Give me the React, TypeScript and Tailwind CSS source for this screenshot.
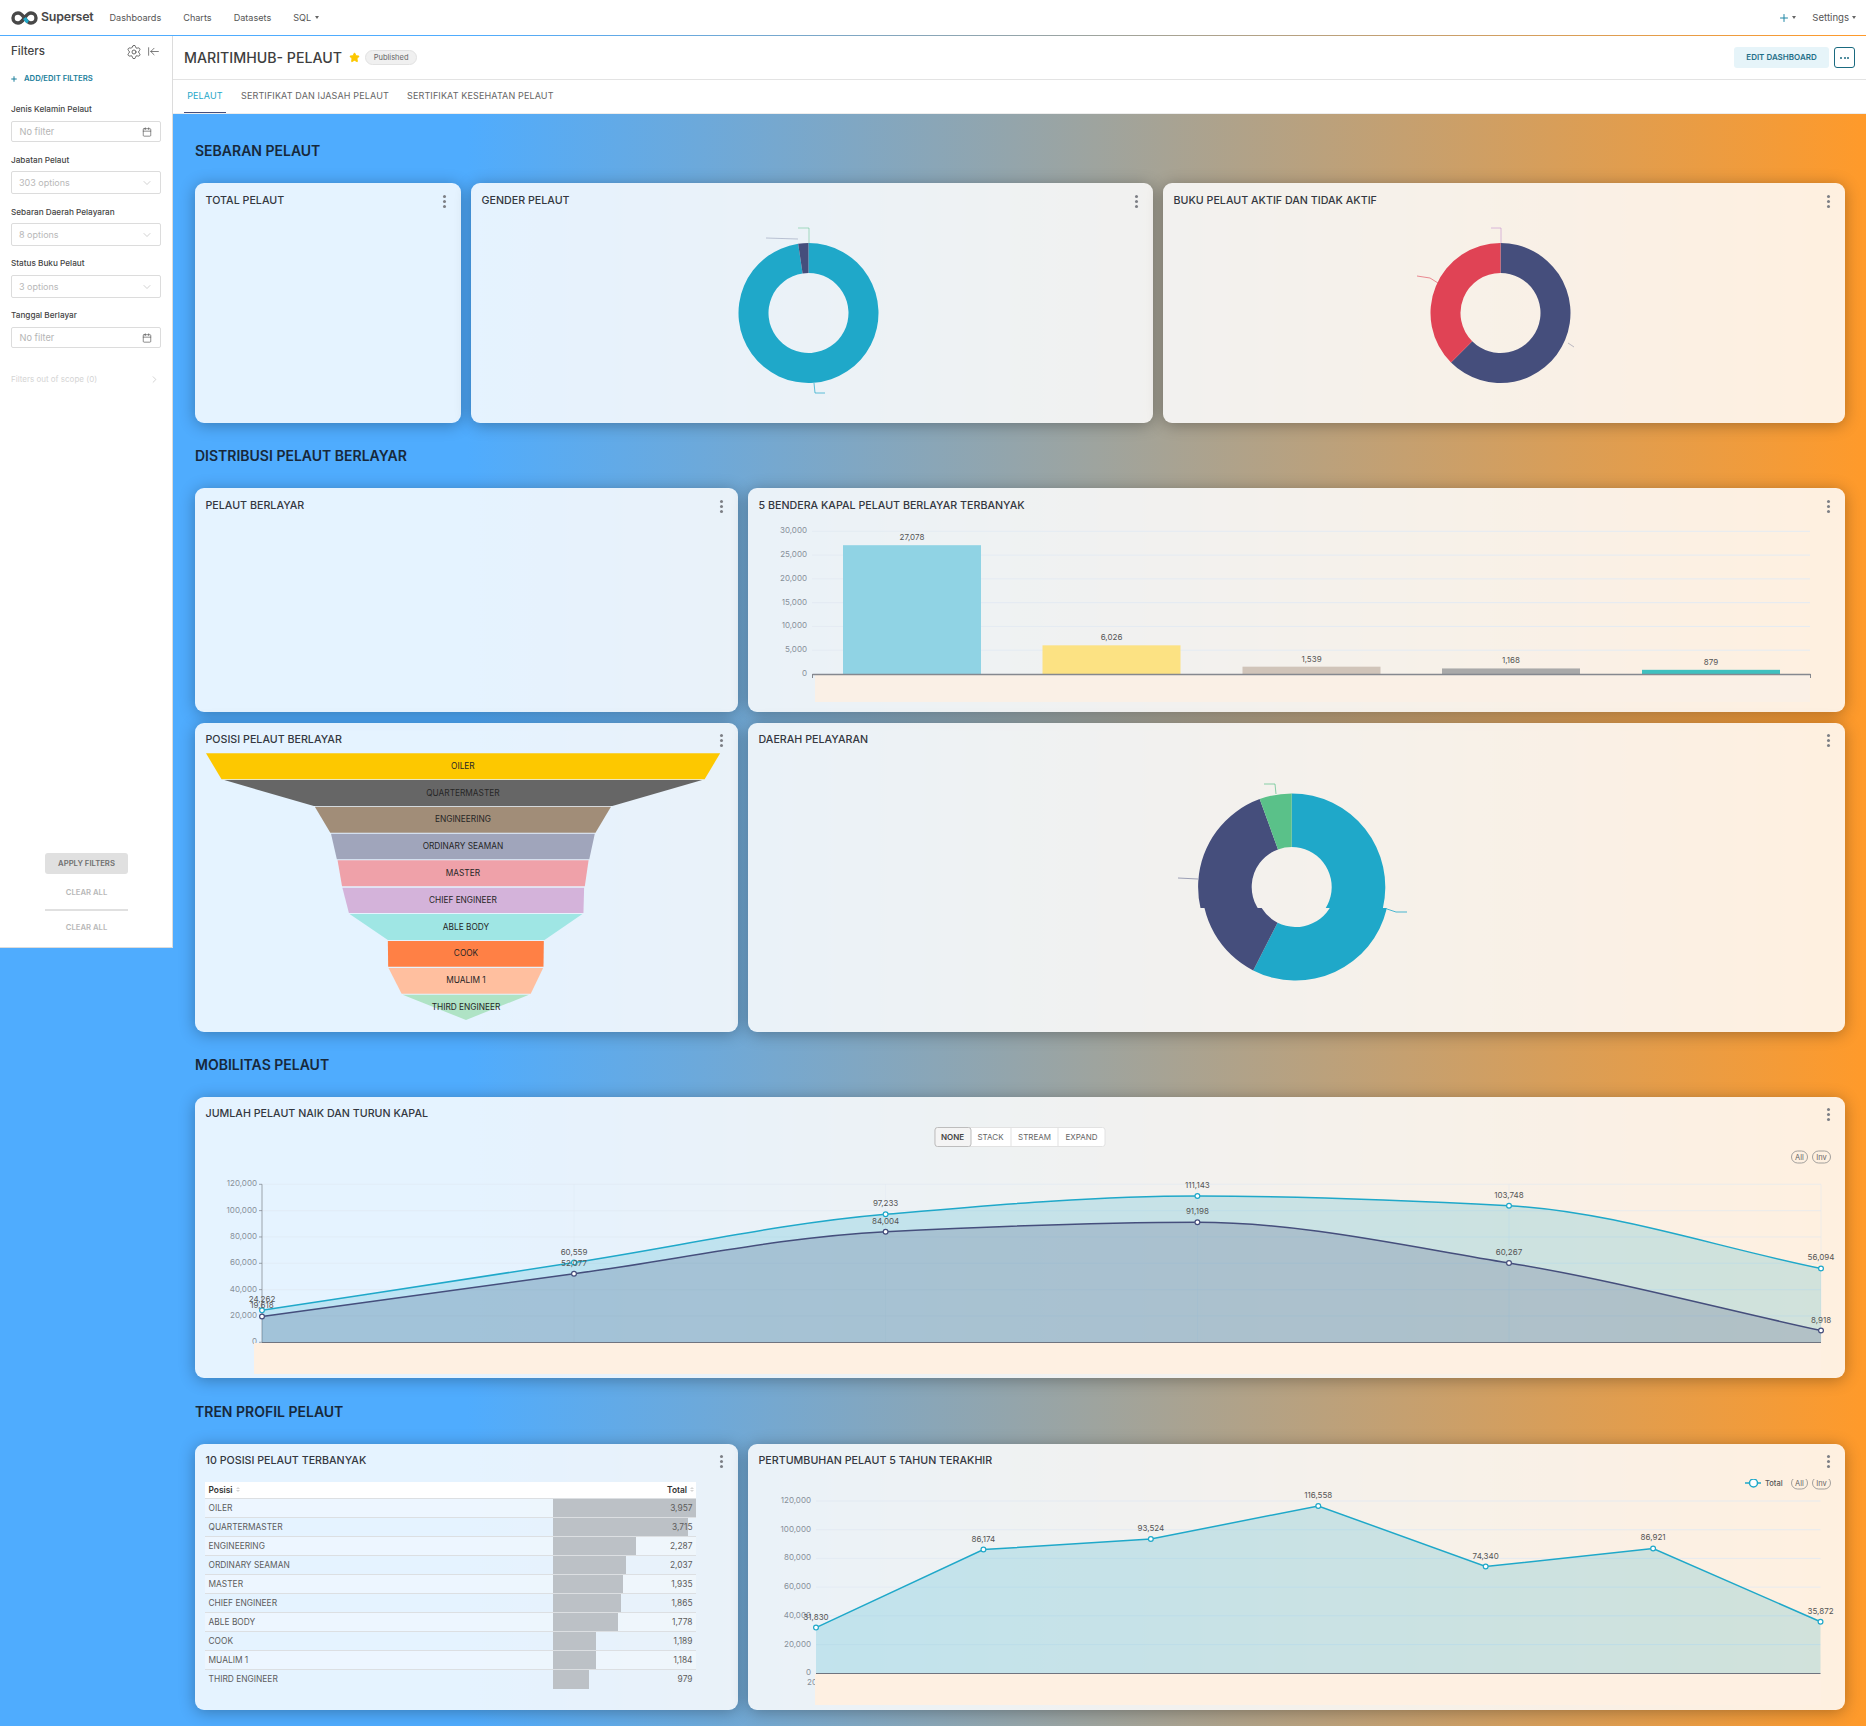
import React from "react";
import { ArrowLeftToLine, Calendar, ChevronDown, ChevronRight, Plus, Settings, Star } from "lucide-react";

const CYAN = "#1fa8c9";
const NAVY = "#454e7c";

type Pt = [number, number];

// d3 style monotone curve, the line charts use it
function monotonePath(pts: Pt[]) {
  const n = pts.length;
  const dx: number[] = [];
  const m: number[] = [];
  for (let i = 0; i < n - 1; i++) {
    dx.push(pts[i + 1][0] - pts[i][0]);
    m.push((pts[i + 1][1] - pts[i][1]) / dx[i]);
  }
  const t: number[] = [m[0]];
  for (let i = 1; i < n - 1; i++) {
    t.push(m[i - 1] * m[i] <= 0 ? 0 : (2 * m[i - 1] * m[i]) / (m[i - 1] + m[i]));
  }
  t.push(m[n - 2]);
  let d = `M${pts[0][0]} ${pts[0][1]}`;
  for (let i = 0; i < n - 1; i++) {
    const h = dx[i] / 3;
    d += ` C${pts[i][0] + h} ${pts[i][1] + h * t[i]} ${pts[i + 1][0] - h} ${pts[i + 1][1] - h * t[i + 1]} ${pts[i + 1][0]} ${pts[i + 1][1]}`;
  }
  return d;
}

function arc(cx: number, cy: number, r: number, r0: number, a0: number, a1: number) {
  const p = (rad: number, a: number) => {
    const t = (a * Math.PI) / 180;
    return `${cx + rad * Math.sin(t)} ${cy - rad * Math.cos(t)}`;
  };
  const big = a1 - a0 > 180 ? 1 : 0;
  return `M${p(r, a0)} A${r} ${r} 0 ${big} 1 ${p(r, a1)} L${p(r0, a1)} A${r0} ${r0} 0 ${big} 0 ${p(r0, a0)} Z`;
}

const Kebab = () => (
  <div className="flex flex-col gap-[2px]">
    <span className="w-[3px] h-[3px] rounded-full bg-[#7d7f85]" />
    <span className="w-[3px] h-[3px] rounded-full bg-[#7d7f85]" />
    <span className="w-[3px] h-[3px] rounded-full bg-[#7d7f85]" />
  </div>
);

function Card({ title, low = false, className, children }: { title: string; low?: boolean; className: string; children?: React.ReactNode }) {
  return (
    <div className={`rounded-[9px] bg-white/85 shadow-[0_2px_16px_rgba(0,0,0,0.3)] flex flex-col overflow-hidden ${className}`}>
      <div className={`h-[35px] shrink-0 flex items-center justify-between pl-[10.5px] pr-[15px] ${low ? "pt-[1px]" : ""}`}>
        <span className="text-[10.7px] font-medium text-[#333740]">{title}</span>
        <Kebab />
      </div>
      {children}
    </div>
  );
}

const SectionTitle = ({ children, className = "" }: { children: React.ReactNode; className?: string }) => (
  <h2 className={`h-[65px] flex items-center text-[14px] font-semibold text-[#17283a] ${className}`}>{children}</h2>
);

const FilterLabel = ({ children, className }: { children: React.ReactNode; className: string }) => (
  <div className={`text-[8.2px] font-medium text-[#444] leading-[12px] ${className}`}>{children}</div>
);

const DateBox = () => (
  <div className="h-[21px] border border-[#dcdcdc] rounded-[2px] flex items-center justify-between pl-[7.5px] pr-[8px] text-[9.2px] text-[#b5b5b5]">
    No filter
    <Calendar size={10} strokeWidth={1.6} className="text-[#555]" />
  </div>
);

const SelectBox = ({ text }: { text: string }) => (
  <div className="h-[23px] border border-[#dcdcdc] rounded-[2px] flex items-center justify-between pl-[7px] pr-[7px] text-[9px] text-[#b8b8b8]">
    {text}
    <ChevronDown size={12} strokeWidth={1.1} className="text-[#aaa]" />
  </div>
);

function Sidebar() {
  return (
    <aside className="w-[173px] h-[912px] shrink-0 bg-white border-r border-b border-[#dcdcdc] relative px-[11px]">
      <div className="flex items-center justify-between h-[30px] pt-[1px]">
        <span className="text-[11.5px] font-medium text-[#444]">Filters</span>
        <div className="flex items-center gap-[5px] pr-[1px]">
          <Settings size={16} strokeWidth={1.3} className="text-[#555]" />
          <ArrowLeftToLine size={13} strokeWidth={1.4} className="text-[#555]" />
        </div>
      </div>
      <div className="flex items-center gap-[4px] h-[24px] pt-[1px] -ml-[1px] text-[7.7px] font-semibold text-[#1b7e9b]">
        <Plus size={8} strokeWidth={3} className="text-[#1b7e9b]" />
        <span className="ml-[2px]">ADD/EDIT FILTERS</span>
      </div>
      <FilterLabel className="mt-[13px] mb-[6px]">Jenis Kelamin Pelaut</FilterLabel>
      <DateBox />
      <FilterLabel className="mt-[12px] mb-[5px]">Jabatan Pelaut</FilterLabel>
      <SelectBox text="303 options" />
      <FilterLabel className="mt-[12px] mb-[5px]">Sebaran Daerah Pelayaran</FilterLabel>
      <SelectBox text="8 options" />
      <FilterLabel className="mt-[11px] mb-[6px]">Status Buku Pelaut</FilterLabel>
      <SelectBox text="3 options" />
      <FilterLabel className="mt-[11px] mb-[6px]">Tanggal Berlayar</FilterLabel>
      <DateBox />
      <div className="flex items-center justify-between mt-[25px] text-[8px] text-[#d4d4d4] pr-[1px]">
        Filters out of scope (0)
        <ChevronRight size={11} strokeWidth={1.2} className="text-[#b0b0b0]" />
      </div>
      <div className="absolute left-[45px] top-[817px] w-[83px] flex flex-col items-center">
        <div className="w-full h-[21px] rounded-[3px] bg-[#e0e0e0] text-[#6f6f6f] text-[7.7px] font-semibold flex items-center justify-center">APPLY FILTERS</div>
        <div className="mt-[12px] text-[7.7px] font-semibold text-[#b8b8b8] leading-[14px]">CLEAR ALL</div>
        <div className="w-full h-[2px] bg-[#e0e0e0] mt-[9px]" />
        <div className="mt-[10px] text-[7.7px] font-semibold text-[#b8b8b8] leading-[14px]">CLEAR ALL</div>
      </div>
    </aside>
  );
}

function TopNav() {
  return (
    <header className="h-[35px] bg-white flex items-center pl-[11px] pr-[10px] text-[9.1px] text-[#555]">
      <svg width="27" height="14" viewBox="0 0 27 14" fill="none" className="shrink-0">
        <path d="M13.5 7C11.5 4 10 2 7 2A5 5 0 0 0 7 12C10 12 11.5 10 13.5 7C15.5 4 17 2 20 2A5 5 0 0 1 20 12C17 12 15.5 10 13.5 7" stroke="#484848" strokeWidth="3.4" />
        <path d="M12.6 8.3C11.6 9.6 10.6 10.7 9.5 11.3" stroke="#484848" strokeWidth="3.4" />
        <path d="M13.5 7C14.7 8.8 15.8 10.4 17 11.2" stroke={CYAN} strokeWidth="3.4" />
      </svg>
      <span className="ml-[3px] text-[12.4px] font-semibold text-[#484848] tracking-[-0.2px]">Superset</span>
      <nav className="flex items-center gap-[22px] ml-[16px] pt-[1px]">
        <span>Dashboards</span>
        <span>Charts</span>
        <span>Datasets</span>
        <span className="flex items-center gap-[4px]">
          SQL <span className="border-x-[2.5px] border-x-transparent border-t-[3px] border-t-[#666]" />
        </span>
      </nav>
      <div className="ml-auto flex items-center pt-[1px]">
        <Plus size={12} strokeWidth={2} className="text-[#1f86a5]" />
        <span className="ml-[2px] border-x-[2.5px] border-x-transparent border-t-[3px] border-t-[#666]" />
        <span className="ml-[16px] text-[9.6px]">Settings</span>
        <span className="ml-[3px] border-x-[2.5px] border-x-transparent border-t-[3px] border-t-[#666]" />
      </div>
    </header>
  );
}

function DashboardHeader() {
  return (
    <div className="bg-white">
      <div className="h-[44px] border-b-[1px] border-[#e3e3e3] flex items-center pl-[11px] pr-[11px]">
        <span className="text-[14.2px] font-medium text-[#3e3e3e]">MARITIMHUB- PELAUT</span>
        <Star size={11} fill="#fcc700" stroke="#fcc700" className="ml-[7px]" />
        <span className="ml-[5px] h-[15px] w-[52px] rounded-full bg-[#f0f0f0] border border-[#e2e2e2] text-[7.5px] text-[#666] flex items-center justify-center">Published</span>
        <div className="ml-auto flex items-center gap-[5px]">
          <div className="h-[21px] w-[95px] rounded-[3px] bg-[#e6f4f9] text-[8px] font-semibold text-[#1f6f88] flex items-center justify-center pb-[1px]">EDIT DASHBOARD</div>
          <div className="h-[21px] w-[21px] rounded-[3px] border border-[#1a6a80] bg-white flex items-center justify-center text-[#1a6a80] gap-[1.5px]">
            <span className="w-[2px] h-[2px] rounded-full bg-[#1a6a80]" />
            <span className="w-[2px] h-[2px] rounded-full bg-[#1a6a80]" />
            <span className="w-[2px] h-[2px] rounded-full bg-[#1a6a80]" />
          </div>
        </div>
      </div>
      <div className="h-[34px] border-b border-[#ededed] flex items-stretch pl-[11px] text-[9px] text-[#666] tracking-[0.14px]">
        <div className="w-[42px] flex items-center justify-center text-[#1fa8c9] border-b-[1px] border-[#454e7c]">PELAUT</div>
        <div className="ml-[15px] flex items-center pb-[1px]">SERTIFIKAT DAN IJASAH PELAUT</div>
        <div className="ml-[18px] flex items-center pb-[1px]">SERTIFIKAT KESEHATAN PELAUT</div>
      </div>
    </div>
  );
}

function Donut({ slices, lines }: { slices: { from: number; to: number; color: string }[]; lines: { points: string; color: string; opacity: number }[] }) {
  // 682x205, the donut sits near the middle of the card
  return (
    <svg width="682" height="205" viewBox="-341 -95 682 205" className="block">
      {slices.map((s, i) => (
        <path key={i} d={arc(-3.5, 0, 70, 40, s.from, s.to)} fill={s.color} />
      ))}
      {lines.map((l, i) => (
        <polyline key={i} points={l.points} fill="none" stroke={l.color} strokeWidth="1" opacity={l.opacity} />
      ))}
    </svg>
  );
}

function BarChart() {
  const bars = [
    { x: 843, v: 27078, c: "#90d3e4" },
    { x: 1042.5, v: 6026, c: "#fce283" },
    { x: 1242.5, v: 1539, c: "#d0c4b9" },
    { x: 1442, v: 1168, c: "#a9a9a9" },
    { x: 1642, v: 879, c: "#3ec0bf" },
  ];
  const y0 = 674;
  const k = 142.7 / 30000;
  return (
    <svg width="1097" height="189" viewBox="748 523 1097 189" className="block" fontFamily="Inter, sans-serif">
      {[0, 5000, 10000, 15000, 20000, 25000, 30000].map((t) => (
        <g key={t}>
          {t > 0 && <line x1="812" x2="1810" y1={y0 - t * k} y2={y0 - t * k} stroke="#e4ebf3" />}
          <text x="807" y={y0 - t * k + 2} fontSize="8" textAnchor="end" fill="#87909a">{t.toLocaleString("en-US")}</text>
        </g>
      ))}
      {bars.map((b) => (
        <g key={b.x}>
          <rect x={b.x} y={y0 - b.v * k} width="138" height={b.v * k} fill={b.c} />
          <text x={b.x + 69} y={y0 - b.v * k - 5} fontSize="8" textAnchor="middle" fill="#555">{b.v.toLocaleString("en-US")}</text>
        </g>
      ))}
      <rect x="815" y="675" width="995" height="27" fill="#faf0e6" />
      <line x1="812.5" x2="1810.5" y1="674.5" y2="674.5" stroke="#85888f" strokeWidth="1.3" />
      <line x1="812.5" x2="812.5" y1="674" y2="678" stroke="#85888f" />
      <line x1="1810.5" x2="1810.5" y1="674" y2="678" stroke="#85888f" />
    </svg>
  );
}

const funnelRows = [
  { t: 753.3, b: 779.3, tl: 32, tr: 1525, bl: 77, br: 1480, c: "#fdc800", label: "OILER", cx: 778 },
  { t: 780, b: 806, tl: 85, tr: 1473, bl: 345, br: 1212, c: "#666666", label: "QUARTERMASTER", cx: 778 },
  { t: 806.7, b: 832.7, tl: 348, tr: 1208, bl: 393, br: 1163, c: "#a18d78", label: "ENGINEERING", cx: 778 },
  { t: 833.7, b: 859.3, tl: 395, tr: 1161, bl: 412, br: 1145, c: "#a0a5bb", label: "ORDINARY SEAMAN", cx: 778 },
  { t: 860.3, b: 886.3, tl: 414, tr: 1143, bl: 427, br: 1132, c: "#efa1a9", label: "MASTER", cx: 778 },
  { t: 887.7, b: 913, tl: 428, tr: 1130, bl: 447, br: 1128, c: "#d4b3da", label: "CHIEF ENGINEER", cx: 778 },
  { t: 914, b: 940, tl: 449, tr: 1125, bl: 560, br: 1015, c: "#9fe6e4", label: "ABLE BODY", cx: 787 },
  { t: 941, b: 966.7, tl: 560, tr: 1013, bl: 561, br: 1012, c: "#ff8045", label: "COOK", cx: 787 },
  { t: 968, b: 993.7, tl: 562, tr: 1011, bl: 600, br: 975, c: "#ffbf9f", label: "MUALIM 1", cx: 787 },
  { t: 994.7, b: 1020, tl: 603, tr: 970, bl: 787, br: 787, c: "#afe3c5", label: "THIRD ENGINEER", cx: 787 },
];

function Funnel() {
  const fx = (px: number) => 195 + px / 2.904;
  return (
    <svg width="543" height="279" viewBox="195 753 543 279" className="block -mt-[5px]" fontFamily="Inter, sans-serif">
      {funnelRows.map((r) => (
        <g key={r.label}>
          <polygon points={`${fx(r.tl)},${r.t} ${fx(r.tr)},${r.t} ${fx(r.br)},${r.b} ${fx(r.bl)},${r.b}`} fill={r.c} />
          <text x={fx(r.cx)} y={(r.t + r.b) / 2 + 2.6} fontSize="8.3" textAnchor="middle" fill="#262626">{r.label}</text>
        </g>
      ))}
    </svg>
  );
}

function PiePelayaran() {
  const pie = (dx: number) => (
    <g transform={`translate(${dx} 0)`}>
      <path d={arc(1291.7, 887, 93.6, 40, 0, 207)} fill={CYAN} />
      <path d={arc(1291.7, 887, 93.6, 40, 207, 340)} fill={NAVY} />
      <path d={arc(1291.7, 887, 93.6, 40, 340, 360)} fill="#5ac189" />
    </g>
  );
  return (
    <svg width="1097" height="274" viewBox="748 758 1097 274" className="block">
      <defs>
        <clipPath id="pieTop"><rect x="1100" y="780" width="400" height="128" /></clipPath>
        <clipPath id="pieBottom"><rect x="1100" y="908" width="400" height="100" /></clipPath>
      </defs>
      <g clipPath="url(#pieTop)">{pie(0)}</g>
      <g clipPath="url(#pieBottom)">{pie(4)}</g>
      <polyline points="1264,784 1275,784 1276,794" fill="none" stroke="#5ac189" opacity="0.7" />
      <polyline points="1178,878 1198,879" fill="none" stroke={NAVY} opacity="0.5" />
      <polyline points="1387,909 1396,912 1407,912" fill="none" stroke={CYAN} opacity="0.8" />
    </svg>
  );
}

function AllInv({ y }: { y: number }) {
  return (
    <g fontSize="7.5" textAnchor="middle" fill="#666">
      <rect x="1791.5" y={y - 6} width="16" height="12" rx="6" fill="none" stroke="#8b8b8b" strokeWidth="0.8" />
      <text x="1799.5" y={y + 2.5}>All</text>
      <rect x="1812.5" y={y - 6} width="18" height="12" rx="6" fill="none" stroke="#8b8b8b" strokeWidth="0.8" />
      <text x="1821.5" y={y + 2.5}>Inv</text>
    </g>
  );
}

const xs4 = [262, 574, 885.6, 1197.4, 1509, 1821];
const s1 = [24262, 60559, 97233, 111143, 103748, 56094];
const s2 = [19618, 52077, 84004, 91198, 60267, 8918];

function MobilityChart() {
  const y0 = 1342.3;
  const k = 158 / 120000;
  const y = (v: number) => y0 - v * k;
  const p1 = xs4.map((x, i): Pt => [x, y(s1[i])]);
  const p2 = xs4.map((x, i): Pt => [x, y(s2[i])]);
  const close = ` L1821 ${y0} L262 ${y0} Z`;
  return (
    <svg width="1650" height="231" viewBox="195 1147 1650 231" className="block" fontFamily="Inter, sans-serif">
      <AllInv y={1157} />
      {[20000, 40000, 60000, 80000, 100000, 120000].map((t) => (
        <line key={t} x1="262" x2="1821" y1={y(t)} y2={y(t)} stroke="#dfe9f3" strokeWidth="0.8" opacity="0.7" />
      ))}
      {xs4.slice(1).map((x) => (
        <line key={x} x1={x} x2={x} y1={y(120000)} y2={y0} stroke="#dfe9f3" strokeWidth="0.8" opacity="0.6" />
      ))}
      {[0, 20000, 40000, 60000, 80000, 100000, 120000].map((t) => (
        <g key={t}>
          <text x="257" y={y(t) + 2} fontSize="8" textAnchor="end" fill="#87909a">{t.toLocaleString("en-US")}</text>
          <line x1="259" x2="262" y1={y(t)} y2={y(t)} stroke="#7d8188" strokeWidth="0.7" />
        </g>
      ))}
      <line x1="262" x2="262" y1={y(120000)} y2={y0} stroke="#7d8188" strokeWidth="0.7" />
      <path d={monotonePath(p1) + close} fill={CYAN} fillOpacity="0.2" />
      <path d={monotonePath(p2) + close} fill={NAVY} fillOpacity="0.22" />
      <path d={monotonePath(p1)} fill="none" stroke={CYAN} strokeWidth="1.5" />
      <path d={monotonePath(p2)} fill="none" stroke={NAVY} strokeWidth="1.5" />
      {p1.map(([x, py], i) => (
        <g key={x}>
          <circle cx={x} cy={py} r="2.4" fill="white" stroke={CYAN} strokeWidth="1.2" />
          <text x={x} y={py - 8} fontSize="8" textAnchor="middle" fill="#555">{s1[i].toLocaleString("en-US")}</text>
        </g>
      ))}
      {p2.map(([x, py], i) => (
        <g key={x}>
          <circle cx={x} cy={py} r="2.4" fill="white" stroke={NAVY} strokeWidth="1.2" />
          <text x={x} y={py - 8} fontSize="8" textAnchor="middle" fill="#555">{s2[i].toLocaleString("en-US")}</text>
        </g>
      ))}
      <rect x="254" y="1343" width="1567" height="31" fill="#fef0e2" />
      <line x1="262" x2="1821" y1="1342.5" y2="1342.5" stroke="#6f7480" />
    </svg>
  );
}

function GrowthChart() {
  const vals = [31830, 86174, 93524, 116558, 74340, 86921, 35872];
  const y0 = 1673.3;
  const k = 172.3 / 120000;
  const y = (v: number) => y0 - v * k;
  const pts = vals.map((v, i): Pt => [816 + i * 167.42, y(v)]);
  const line = pts.map((p) => p.join(",")).join(" ");
  return (
    <svg width="1097" height="231" viewBox="748 1479 1097 231" className="block" fontFamily="Inter, sans-serif">
      <line x1="1745" x2="1761" y1="1483" y2="1483" stroke={CYAN} strokeWidth="1.5" />
      <circle cx="1753.5" cy="1483" r="4" fill="white" stroke={CYAN} strokeWidth="1.5" />
      <text x="1765" y="1486" fontSize="7.5" fontWeight="500" fill="#555">Total</text>
      <AllInv y={1483} />
      {[20000, 40000, 60000, 80000, 100000, 120000].map((t) => (
        <line key={t} x1="816" x2="1820.5" y1={y(t)} y2={y(t)} stroke="#e1e9f2" strokeWidth="0.8" />
      ))}
      {[0, 20000, 40000, 60000, 80000, 100000, 120000].map((t) => (
        <text key={t} x="811" y={y(t) + 2} fontSize="8" textAnchor="end" fill="#87909a">{t.toLocaleString("en-US")}</text>
      ))}
      <polygon points={`816,${y0} ${line} 1820.5,${y0}`} fill={CYAN} fillOpacity="0.2" />
      <polyline points={line} fill="none" stroke={CYAN} strokeWidth="1.5" />
      {pts.map(([x, py], i) => (
        <g key={x}>
          <circle cx={x} cy={py} r="2.4" fill="white" stroke={CYAN} strokeWidth="1.2" />
          <text x={x} y={py - 8} fontSize="8" textAnchor="middle" fill="#555">{vals[i].toLocaleString("en-US")}</text>
        </g>
      ))}
      <text x="807" y="1685" fontSize="8" fill="#87909a">20</text>
      <rect x="815" y="1674" width="1006" height="31" fill="#fef0e2" />
      <line x1="816" x2="1820.5" y1="1673.5" y2="1673.5" stroke="#6f7480" />
    </svg>
  );
}

const tableRows: [string, string, number][] = [
  ["OILER", "3,957", 143],
  ["QUARTERMASTER", "3,715", 135],
  ["ENGINEERING", "2,287", 83],
  ["ORDINARY SEAMAN", "2,037", 73],
  ["MASTER", "1,935", 70],
  ["CHIEF ENGINEER", "1,865", 68],
  ["ABLE BODY", "1,778", 65],
  ["COOK", "1,189", 43],
  ["MUALIM 1", "1,184", 43],
  ["THIRD ENGINEER", "979", 36],
];

const SortIcon = () => (
  <span className="inline-flex flex-col gap-[1px] ml-[3px]">
    <span className="border-x-[2px] border-x-transparent border-b-[2.5px] border-b-[#d5d5d5]" />
    <span className="border-x-[2px] border-x-transparent border-t-[2.5px] border-t-[#d5d5d5]" />
  </span>
);

function TopTable() {
  return (
    <div className="ml-[10px] mr-[42px] mt-[3px] text-[8.4px] text-[#5c5c5c]">
      <div className="h-[17px] bg-white border-b border-[#dcdfe2] flex items-center justify-between pl-[3.5px] pr-[2px] font-semibold text-[#333]">
        <span className="flex items-center">Posisi<SortIcon /></span>
        <span className="flex items-center">Total<SortIcon /></span>
      </div>
      {tableRows.map(([name, total, w], i) => (
        <div key={name} className={`relative h-[19px] flex items-center justify-between px-[3.5px] ${i < 8 ? "pt-[1px]" : ""} ${i < 9 ? "border-b border-[#dcdfe2]" : ""} ${i % 2 === 0 ? "bg-white/30" : ""}`}>
          <div className="absolute left-[348px] top-0 bottom-0 bg-[#bcc1c6]" style={{ width: w }} />
          <span className="relative">{name}</span>
          <span className="relative">{total}</span>
        </div>
      ))}
    </div>
  );
}

export default function App() {
  return (
    <div className="w-[1866px] min-h-[1726px] bg-[linear-gradient(90deg,#4facfe_25%,#ff9a2a_100%)] font-['Inter',sans-serif] pb-[16px]">
      <TopNav />
      <div className="flex mt-[1px] items-start">
        <Sidebar />
        <main className="flex-1 min-w-0">
          <DashboardHeader />
          <div className="pl-[22px] pr-[21px]">
            <SectionTitle className="mt-[4px]">SEBARAN PELAUT</SectionTitle>
            <div className="flex gap-[10px] h-[240px]">
              <Card low title="TOTAL PELAUT" className="w-[266px]" />
              <Card low title="GENDER PELAUT" className="flex-1">
                <Donut
                  slices={[
                    { from: 0, to: 351.5, color: CYAN },
                    { from: 351.5, to: 360, color: NAVY },
                  ]}
                  lines={[
                    { points: "-14,-85 -3,-85 -3,-70", color: "#5ac189", opacity: 0.5 },
                    { points: "-46,-75 -14,-74", color: NAVY, opacity: 0.3 },
                    { points: "2,70 3,80 13,80", color: CYAN, opacity: 0.7 },
                  ]}
                />
              </Card>
              <Card low title="BUKU PELAUT AKTIF DAN TIDAK AKTIF" className="flex-1">
                <Donut
                  slices={[
                    { from: 0, to: 225, color: NAVY },
                    { from: 225, to: 360, color: "#e04355" },
                  ]}
                  lines={[
                    { points: "-13,-85 -3,-85 -3,-70", color: "#c58fd0", opacity: 0.6 },
                    { points: "-87,-37 -74,-35 -66,-30", color: "#e04355", opacity: 0.6 },
                    { points: "64,30 70,34", color: NAVY, opacity: 0.35 },
                  ]}
                />
              </Card>
            </div>

            <SectionTitle>DISTRIBUSI PELAUT BERLAYAR</SectionTitle>
            <div className="flex gap-[10px] h-[224px]">
              <Card low title="PELAUT BERLAYAR" className="w-[543px]" />
              <Card low title="5 BENDERA KAPAL PELAUT BERLAYAR TERBANYAK" className="flex-1">
                <BarChart />
              </Card>
            </div>
            <div className="flex gap-[10px] h-[309px] mt-[11px]">
              <Card title="POSISI PELAUT BERLAYAR" className="w-[543px]">
                <Funnel />
              </Card>
              <Card title="DAERAH PELAYARAN" className="flex-1">
                <PiePelayaran />
              </Card>
            </div>

            <SectionTitle>MOBILITAS PELAUT</SectionTitle>
            <Card title="JUMLAH PELAUT NAIK DAN TURUN KAPAL" className="h-[281px]">
              <div className="h-[20px] -mt-[5px] shrink-0 flex justify-center">
                <div className="flex text-[8px] text-[#666] border border-[#e2e2e2] rounded-[3px] bg-white -translate-x-[0.5px]">
                  <span className="w-[37px] flex items-center justify-center font-semibold text-[#444] bg-[#f4f4f4] border border-[#bdbdbd] rounded-[3px] -m-[1px]">NONE</span>
                  <span className="w-[41px] flex items-center justify-center border-r border-[#e2e2e2] pl-[1px]">STACK</span>
                  <span className="w-[47px] flex items-center justify-center border-r border-[#e2e2e2] pl-[1px]">STREAM</span>
                  <span className="w-[46px] flex items-center justify-center pl-[1px]">EXPAND</span>
                </div>
              </div>
              <MobilityChart />
            </Card>

            <SectionTitle className="h-[66px]">TREN PROFIL PELAUT</SectionTitle>
            <div className="flex gap-[10px] h-[266px]">
              <Card title="10 POSISI PELAUT TERBANYAK" className="w-[543px]">
                <TopTable />
              </Card>
              <Card title="PERTUMBUHAN PELAUT 5 TAHUN TERAKHIR" className="flex-1">
                <GrowthChart />
              </Card>
            </div>
          </div>
        </main>
      </div>
    </div>
  );
}
